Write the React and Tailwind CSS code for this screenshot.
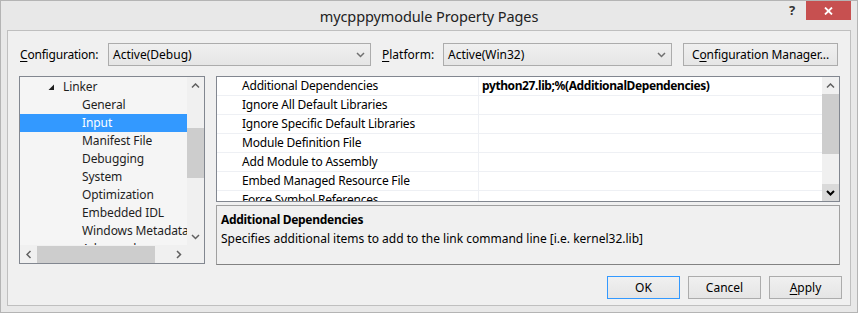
import React from 'react';

const treeItems = [
  { label: 'Linker', level: 0, expanded: true },
  { label: 'General', level: 1 },
  { label: 'Input', level: 1, selected: true },
  { label: 'Manifest File', level: 1 },
  { label: 'Debugging', level: 1 },
  { label: 'System', level: 1 },
  { label: 'Optimization', level: 1 },
  { label: 'Embedded IDL', level: 1 },
  { label: 'Windows Metadata', level: 1 },
  { label: 'Advanced', level: 1 }
];

const gridRows = [
  { name: 'Additional Dependencies', value: 'python27.lib;%(AdditionalDependencies)' },
  { name: 'Ignore All Default Libraries', value: '' },
  { name: 'Ignore Specific Default Libraries', value: '' },
  { name: 'Module Definition File', value: '' },
  { name: 'Add Module to Assembly', value: '' },
  { name: 'Embed Managed Resource File', value: '' },
  { name: 'Force Symbol References', value: '' }
];

function Chevron({ dir = 'down', color = '#606060', strong = false }) {
  const vertical = dir === 'up' || dir === 'down';
  const d = {
    down: 'M1 1l3.5 3.5L8 1',
    up: 'M1 4.5L4.5 1 8 4.5',
    left: 'M4.5 1L1 4.5 4.5 8',
    right: 'M1 1l3.5 3.5L1 8'
  }[dir];
  return (
    <svg width={vertical ? 9 : 6} height={vertical ? 6 : 9} viewBox={vertical ? '0 0 9 6' : '0 0 6 9'}>
      <path d={d} fill="none" stroke={color} strokeWidth={strong ? 2 : 1.5} />
    </svg>
  );
}

function Dropdown({ value, width }) {
  return (
    <div
      className={`flex h-[23px] items-center justify-between border border-[#acacac] bg-gradient-to-b from-[#f0f0f0] to-[#e5e5e5] pl-[4px] pr-[5px] ${width}`}
    >
      <span>{value}</span>
      <Chevron dir="down" color="#707070" />
    </div>
  );
}

function PushButton({ children, width, isDefault = false }) {
  return (
    <div
      className={`flex h-[23px] items-center justify-center border bg-gradient-to-b from-[#f0f0f0] to-[#e5e5e5] ${
        isDefault ? 'border-[#3399ff]' : 'border-[#acacac]'
      } ${width}`}
    >
      {children}
    </div>
  );
}

export default function App() {
  return (
    <div className="flex h-[313px] w-[858px] flex-col border border-[#b4b4b4] bg-[#e8e8e8] font-['Noto_Sans','DejaVu_Sans',sans-serif] text-[12px] leading-none text-black">
      <div className="grid h-[29px] shrink-0 grid-cols-[1fr_auto_1fr]">
        <div />
        <div className="pt-[6px] text-[14.5px] leading-[18px] tracking-[-0.1px] text-[#222]">mycpppymodule Property Pages</div>
        <div className="flex items-start justify-end pr-[6px]">
          <div className="mr-[2px] flex h-[19px] w-[24px] items-center justify-center text-[13px] font-bold text-[#333]">?</div>
          <div className="flex h-[19px] w-[45px] items-center justify-center bg-[#c75050]">
            <svg width="9" height="8" viewBox="0 0 9 8">
              <path d="M1 0.5l7 7M8 0.5l-7 7" stroke="#fff" strokeWidth="1.8" />
            </svg>
          </div>
        </div>
      </div>

      <div className="mx-[6px] flex h-[276px] flex-col border border-[#bfbfbf] bg-[#f0f0f0] pl-[11px] pt-[12px]">
        <div className="flex h-[23px] items-center">
          <span className="w-[89px] pl-[1px] tracking-[-0.2px]">
            <span className="underline underline-offset-2">C</span>onfiguration:
          </span>
          <Dropdown value="Active(Debug)" width="w-[263px]" />
          <span className="ml-[11px] w-[61px]">
            <span className="underline underline-offset-2">P</span>latform:
          </span>
          <Dropdown value="Active(Win32)" width="w-[229px]" />
          <div className="ml-[11px]">
            <PushButton width="w-[155px]">
              <span className="tracking-[-0.1px]">
                C<span className="underline underline-offset-2">o</span>nfiguration Manager...
              </span>
            </PushButton>
          </div>
        </div>

        <div className="mt-[10px] flex gap-[11px]">
          {/* tree */}
          <div className="flex h-[188px] w-[186px] flex-col border border-[#828790] bg-[#f5f5f5]">
            <div className="flex h-[168px]">
              <div className="flex-1 overflow-hidden pt-[1px]">
                {treeItems.map((item) => (
                  <div
                    key={item.label}
                    className={`flex h-[18px] items-center whitespace-nowrap ${
                      item.selected ? 'bg-[#3399ff] text-white' : 'text-[#1e1e1e]'
                    } ${item.level === 0 ? 'pl-[28px]' : 'pl-[62px]'}`}
                  >
                    {item.level === 0 && (
                      <svg width="7" height="7" viewBox="0 0 7 7" className="mr-[8px]">
                        <path d="M6 0.5V6H0.5z" fill="#1e1e1e" />
                      </svg>
                    )}
                    <span className="tracking-[-0.1px]">{item.label}</span>
                  </div>
                ))}
              </div>
              <div className="flex w-[17px] flex-col items-center bg-[#f0f0f0]">
                <div className="flex h-[17px] items-center justify-center">
                  <Chevron dir="up" />
                </div>
                <div className="mt-[34px] h-[50px] w-[17px] bg-[#cdcdcd]" />
                <div className="flex-1" />
                <div className="flex h-[17px] items-center justify-center">
                  <Chevron dir="down" />
                </div>
              </div>
            </div>
            <div className="flex h-[18px]">
              <div className="flex flex-1 items-center bg-[#f0f0f0]">
                <div className="flex w-[17px] justify-center">
                  <Chevron dir="left" />
                </div>
                <div className="h-[17px] w-[118px] bg-[#cdcdcd]" />
                <div className="flex-1" />
                <div className="flex w-[17px] justify-center">
                  <Chevron dir="right" />
                </div>
              </div>
              <div className="w-[17px] bg-[#f0f0f0]" />
            </div>
          </div>

          {/* right column */}
          <div className="flex w-[624px] flex-col gap-[3px]">
            <div className="flex h-[126px] border border-[#828790] bg-white">
              <div className="flex-1 overflow-hidden">
                {gridRows.map((row) => (
                  <div key={row.name} className="flex h-[19px] border-b border-[#eef0f4]">
                    <div className="flex w-[261px] items-center whitespace-nowrap pl-[25px] tracking-[-0.2px]">{row.name}</div>
                    <div className="flex flex-1 items-center whitespace-nowrap border-l border-[#eef0f4] pl-[3px] font-bold tracking-[-0.4px]">
                      {row.value}
                    </div>
                  </div>
                ))}
              </div>
              <div className="flex w-[17px] flex-col bg-[#f0f0f0]">
                <div className="flex h-[17px] items-center justify-center">
                  <Chevron dir="up" />
                </div>
                <div className="h-[60px] bg-[#cdcdcd]" />
                <div className="flex-1" />
                <div className="flex h-[17px] items-center justify-center bg-[#dadada]">
                  <Chevron dir="down" color="#000" strong />
                </div>
              </div>
            </div>
            <div className="flex h-[60px] flex-col border border-[#a0a0a0] border-b-[#828282] bg-[#f0f0f0] pl-[4px] pt-[4px]">
              <div className="flex h-[19px] items-center font-bold tracking-[-0.3px]">Additional Dependencies</div>
              <div className="flex h-[19px] items-center">Specifies additional items to add to the link command line [i.e. kernel32.lib]</div>
            </div>
          </div>
        </div>

        <div className="mt-[11px] flex justify-end gap-[8px] pr-[8px]">
          <PushButton width="w-[73px]" isDefault>
            OK
          </PushButton>
          <PushButton width="w-[73px]">Cancel</PushButton>
          <PushButton width="w-[73px]">
            <span>
              <span className="underline underline-offset-2">A</span>pply
            </span>
          </PushButton>
        </div>
      </div>
    </div>
  );
}
